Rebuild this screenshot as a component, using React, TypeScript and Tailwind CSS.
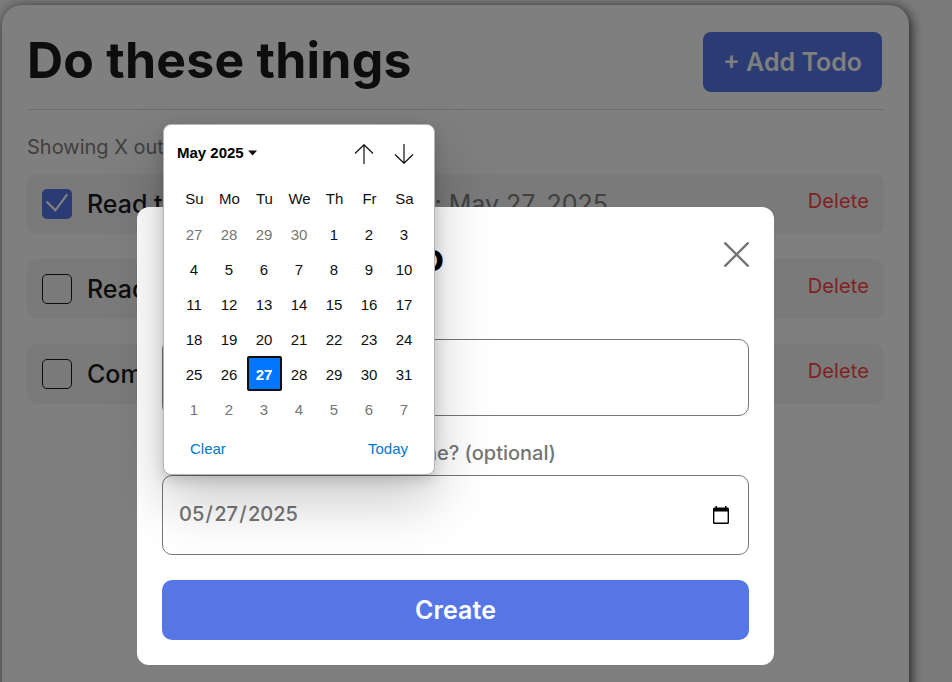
import React from "react";

const weekdays = ["Su", "Mo", "Tu", "We", "Th", "Fr", "Sa"];

// Trailing days of April, all of May, leading days of June.
const days = Array.from({ length: 42 }, (_, i) => {
  if (i < 4) return { n: 27 + i, muted: true };
  if (i < 35) return { n: i - 3, muted: false };
  return { n: i - 34, muted: true };
});

const todos = [
  { title: "Read the docs", due: "Due date: May 27, 2025", done: true },
  { title: "Read a book", due: "", done: false },
  { title: "Complete project", due: "", done: false },
];

function TodoRow({ title, due, done }: { title: string; due: string; done: boolean }) {
  return (
    <li className="flex h-[60px] items-center rounded-[10px] bg-[#f5f5f5] pr-[15px] pl-[15px]">
      {done ? (
        <span className="flex size-[30px] items-center justify-center rounded-[5px] bg-[#5776e6]">
          <svg width="30" height="30" viewBox="0 0 30 30" fill="none" stroke="white" strokeWidth="2.2">
            <path d="M4.6 12.6 L13.4 21.4 L25.2 5.4" />
          </svg>
        </span>
      ) : (
        <span className="size-[30px] rounded-[5px] border border-[#1a1a1a]" />
      )}
      <div className="ml-[15px] flex w-[521px] justify-between text-[25px] leading-[30px] whitespace-nowrap">
        <span className="font-medium text-[#1a1a1a]">{title}</span>
        <span className="text-[#808080]">{due}</span>
      </div>
      <button className="mb-[6px] ml-auto text-[20px] leading-6 tracking-[0.1px] text-[#ff4545]">Delete</button>
    </li>
  );
}

function Calendar() {
  return (
    <div className="absolute top-[124px] left-[163px] flex h-[351px] w-[272px] flex-col rounded-[8px] border border-[#b4b4b4] bg-white font-['Liberation_Sans',Arial,sans-serif] text-[15px] text-[#101010] shadow-[0_25px_57px_rgba(0,0,0,0.22),0_5px_14px_rgba(0,0,0,0.16)]">
      <div className="flex h-[56px] items-center pr-[20px] pl-[13px]">
        <span className="font-bold text-black">May 2025</span>
        <svg className="ml-[4px]" width="10" height="6" viewBox="0 0 10 6">
          <path d="M0.1 0.5H9.1L4.6 5.4Z" fill="#101010" />
        </svg>
        <svg className="mt-[1px] ml-auto" width="20" height="20" viewBox="0 0 20 20" fill="none" stroke="#101010" strokeWidth="1.2">
          <path d="M10 20V1M1 9.5L10 0.7L19 9.5" />
        </svg>
        <svg className="mt-[1px] ml-[20px]" width="20" height="20" viewBox="0 0 20 20" fill="none" stroke="#101010" strokeWidth="1.2">
          <path d="M10 0V19M1 10.5L10 19.3L19 10.5" />
        </svg>
      </div>
      <div className="mt-[1px] ml-[13px] grid w-[245px] grid-cols-7 text-center">
        {weekdays.map((d) => (
          <span key={d} className="h-[34px] leading-[33px]">{d}</span>
        ))}
        {days.map((d, i) =>
          i === 30 ? (
            <span key={i} className="h-[35px] rounded-[2px] border-2 border-[#101010] bg-[#0075ff] pr-px leading-[33px] font-bold text-white">
              {d.n}
            </span>
          ) : (
            <span key={i} className={d.muted ? "h-[35px] pr-px leading-[37px] text-[#757575]" : "h-[35px] pr-px leading-[37px]"}>
              {d.n}
            </span>
          )
        )}
      </div>
      <div className="mt-[12px] flex justify-between pr-[26px] pl-[26px] text-[#0078d4]">
        <span>Clear</span>
        <span>Today</span>
      </div>
    </div>
  );
}

function Modal() {
  return (
    <section className="absolute top-[207px] left-[137px] flex h-[458px] w-[637px] flex-col rounded-[12px] bg-white px-[25px] pb-[25px]">
      <div className="flex h-[95px] items-center justify-between">
        <h2 className="mt-[5px] w-[282px] text-right text-[37.5px] leading-[45px] font-bold whitespace-nowrap text-black">New Todo</h2>
        <svg className="mb-px" width="25" height="25" viewBox="0 0 25 25" fill="none" stroke="#757575" strokeWidth="2.4">
          <path d="M0.5 0.5L24.5 24.5M24.5 0.5L0.5 24.5" />
        </svg>
      </div>
      <label className="mt-[3px] h-[34px] pl-[3px] text-[20px] leading-6 font-medium text-[#757575]">Title</label>
      <div className="h-[77px] rounded-[10px] border border-[#767676]" />
      <label className="mt-[25px] w-[394px] text-right text-[20px] leading-6 font-medium whitespace-nowrap text-[#757575]">
        To be done by what time? (optional)
      </label>
      <div className="mt-[10px] flex h-[80px] shrink-0 items-center justify-between rounded-[10px] border border-[#767676] px-[16px]">
        <span className="mb-[2px] text-[20px] leading-6 font-medium text-[#757575]">
          05<span className="px-[1.3px]">/</span>27<span className="px-[1.3px]">/</span>2025
        </span>
        <svg className="mr-[3px]" width="16" height="18" viewBox="0 0 16 18">
          <path d="M2.5 0h1.5v1.5h8V0h1.5v1.5h1Q16 1.5 16 3V16.5Q16 18 14.5 18H1.5Q0 18 0 16.5V3Q0 1.5 1.5 1.5H2.5ZM1.4 5.4V16.6H14.6V5.4Z" fill="#000" fillRule="evenodd" />
        </svg>
      </div>
      <button className="mt-[25px] h-[60px] shrink-0 rounded-[10px] bg-[#5776e6] text-[25px] leading-[30px] font-semibold tracking-[0.1px] text-white">Create</button>
    </section>
  );
}

export default function App() {
  return (
    <div className="relative h-[682px] w-[952px] overflow-hidden bg-[#f5f5f5] pt-[5px] pl-[2px] font-['Inter',sans-serif]">
      <main className="h-[720px] w-[907px] rounded-[20px] bg-white px-[25px] shadow-[2px_2px_12px_rgba(0,0,0,0.75)]">
        <header className="flex h-[105px] items-center justify-between border-b border-[#dcdcdc] pr-[2px]">
          <h1 className="mt-[5px] text-[50px] leading-[60px] font-bold tracking-[0.22px] text-[#1a1a1a]">Do these things</h1>
          <button className="mt-[10px] h-[60px] w-[179px] rounded-[8px] bg-[#5776e6] text-[25px] leading-[30px] font-semibold text-white">
            + Add Todo
          </button>
        </header>
        <p className="mt-[25px] text-[20px] leading-6 text-[#808080]">Showing X out of X</p>
        <ul className="mt-[15px] flex flex-col gap-[25px]">
          {todos.map((t) => (
            <TodoRow key={t.title} {...t} />
          ))}
        </ul>
      </main>
      <div className="absolute inset-0 bg-black/50" />
      <Modal />
      <Calendar />
    </div>
  );
}
